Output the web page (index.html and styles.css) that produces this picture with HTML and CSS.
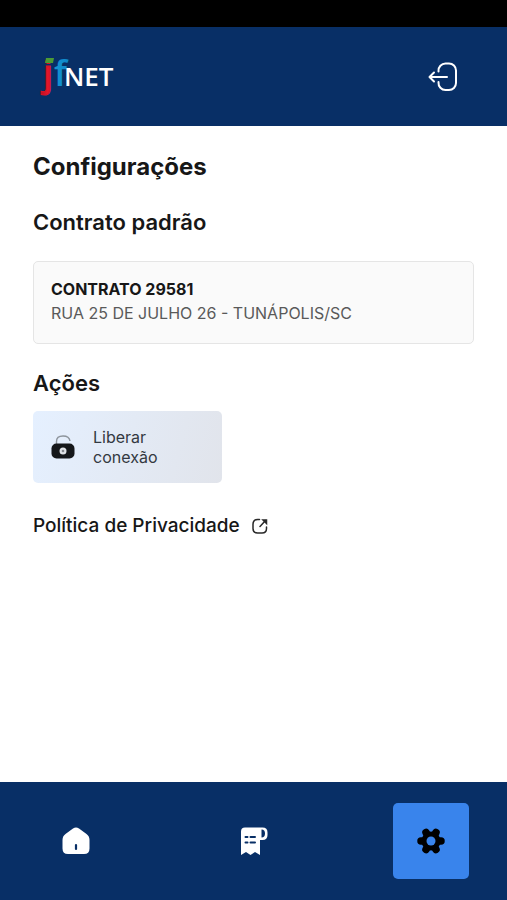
FILE: index.html
```html
<!DOCTYPE html>
<html lang="pt-BR">
<head>
<meta charset="utf-8">
<meta name="viewport" content="width=device-width, initial-scale=1">
<title>Configurações</title>
<link rel="stylesheet" href="styles.css">
</head>
<body>
<div class="status-bar"></div>
<header class="header">
  <svg class="logo" viewBox="0 0 80 44" role="img" aria-label="jfNET">
    <defs>
      <linearGradient id="red" x1="0" x2="1"><stop offset="0" stop-color="#b80d20"/><stop offset=".6" stop-color="#e5172b"/><stop offset="1" stop-color="#c21024"/></linearGradient>
      <linearGradient id="blue" x1="0" x2="1"><stop offset="0" stop-color="#1596d3"/><stop offset="1" stop-color="#0e86c8"/></linearGradient>
    </defs>
    <text class="logo-j" x="9" y="31">j</text>
    <path d="M12 3h8l-1 5h-8z" fill="#4c9b35"/>
    <text class="logo-f" x="20" y="31">f</text>
    <text class="logo-net" x="30" y="31">NET</text>
  </svg>
  <button class="logout" type="button" aria-label="Sair">
    <svg viewBox="0 0 30 30" fill="none" stroke="currentColor" stroke-width="2" stroke-linecap="round" stroke-linejoin="round">
      <path d="M10.500 9.500V9a7 7 0 0 1 7-7.500h3.500a7 7 0 0 1 7 7v12.500a7 7 0 0 1-7 7h-3.500a7 7 0 0 1-7-7.500v-.5M19 15H1.500M6 10.500 1.500 15 6 19.500"/>
    </svg>
  </button>
</header>
<main class="content">
  <h1 class="title">Configurações</h1>
  <h2 class="subtitle">Contrato padrão</h2>
  <section class="contract">
    <strong>CONTRATO 29581</strong>
    <span>RUA 25 DE JULHO 26 - TUNÁPOLIS/SC</span>
  </section>
  <h2 class="subtitle">Ações</h2>
  <div class="actions">
    <button class="action" type="button">
      <svg viewBox="0 0 24 24" aria-hidden="true">
        <path d="M5.500 9V6.500C5.500 2.500 8 1 12 1s6.500 1.500 7 5" fill="none" stroke="#8d949c" stroke-width="1.400"/>
        <rect x=".5" y="8.500" width="23" height="15" rx="5" fill="#15171a"/>
        <circle cx="12" cy="16" r="3.500" fill="#dfe2e6"/>
        <circle cx="12" cy="16" r="1.300" fill="#85898e"/>
      </svg>
      <span>Liberar conexão</span>
    </button>
  </div>
  <a class="privacy" href="#privacidade">Política de Privacidade
    <svg viewBox="0 0 16 16" fill="none" stroke="#292929" stroke-width="1.500" stroke-linecap="round" aria-hidden="true">
      <path d="M7.500 1.500H5.500Q1 1.500 1 6v4.500Q1 15 5.500 15h4.500q4.500 0 4.500-4.500V9M8 8.500l5.500-6"/>
      <path d="M11 2h3.500v3.500z" fill="#292929"/>
    </svg>
  </a>
</main>
<nav class="nav" aria-label="Principal">
  <a class="nav-item" href="#inicio" aria-label="Início">
    <svg viewBox="0 0 30 30">
      <path d="M12 2.500q3-2 6 0l7.500 5.500q3 2.200 3 6v8.500q0 5.500-5.500 5.500H7q-5.500 0-5.500-5.500V14q0-3.800 3-6z" fill="#fff"/>
      <path d="M15 19v4" stroke="#082f66" stroke-width="2.200" stroke-linecap="round"/>
    </svg>
  </a>
  <a class="nav-item" href="#faturas" aria-label="Faturas">
    <svg viewBox="0 0 30 30">
      <path d="M6 1.500h17.500q5 0 5 5V9q0 5-5 5H21v15l-5-3-4.500 3-4.500-3-5 3V5.500q0-4 4-4z" fill="#fff"/>
      <path d="M22.500 3.500q3.500 0 3.500 4t-3.500 4z" fill="#082f66"/>
      <path d="M6.500 11h2M11.500 11H16M6.500 16.500h2M11.500 16.500H16" stroke="#082f66" stroke-width="2" stroke-linecap="round"/>
    </svg>
  </a>
  <a class="nav-item nav-item-active" href="#configuracoes" aria-label="Configurações" aria-current="page">
    <svg viewBox="0 0 30 30">
      <g stroke="#000" stroke-width="7.500" stroke-linecap="round">
        <path d="M5 15h20M10 6.500l10 17M20 6.500l-10 17"/>
      </g>
      <circle cx="15" cy="15" r="9.500"/>
      <circle cx="15" cy="15" r="4.500" fill="#3984ec"/>
    </svg>
  </a>
</nav>
</body>
</html>
```
FILE: styles.css
```css
* { box-sizing: border-box; }

body {
  margin: 0;
  min-height: 100vh;
  display: flex;
  flex-direction: column;
  background: #fff;
  color: #171717;
  font-family: Inter, "Liberation Sans", sans-serif;
}

svg { display: block; flex: none; }

button {
  border: 0;
  font: inherit;
  cursor: pointer;
}

.status-bar { height: 27px; background: #000; }

.header {
  display: flex;
  align-items: center;
  justify-content: space-between;
  padding: 28px 49px 27px 34px;
  background: #082f66;
}

.logo { width: 80px; height: 44px; overflow: visible; }
.logo-j, .logo-f { font: 600 36px "Open Sans", sans-serif; }
.logo-j { fill: url(#red); stroke: #d51429; stroke-width: 1; }
.logo-f { fill: url(#blue); }
.logo-net { font: 600 26px "Open Sans", sans-serif; fill: #fff; }

.logout { padding: 0; background: none; color: #fff; }
.logout svg { width: 30px; height: 30px; }

.content { flex: 1; padding: 25px 33px; }

.title, .subtitle { margin: 0; }
.title { font-size: 24px; font-weight: 700; line-height: 32px; }
.subtitle { margin-top: 25px; font-size: 22px; font-weight: 600; line-height: 28px; }

.contract {
  display: flex;
  flex-direction: column;
  margin-top: 25px;
  padding: 15px 17px 18px;
  border: 1px solid #e5e5e5;
  border-radius: 5px;
  background: #fafafa;
  font-size: 16px;
  line-height: 24px;
}
.contract span { color: #595959; }

.actions {
  display: grid;
  grid-template-columns: repeat(2, minmax(0, 1fr));
  gap: 63px;
  margin-top: 14px;
}
.action {
  display: flex;
  align-items: center;
  gap: 18px;
  padding: 16px 18px;
  border-radius: 5px;
  background: linear-gradient(105deg, #e5f0ff, #e1e4eb);
  color: #333941;
  font-size: 16px;
  line-height: 20px;
  text-align: left;
}
.action svg { width: 24px; height: 24px; }

.privacy {
  display: flex;
  align-items: center;
  gap: 12px;
  margin-top: 31px;
  color: #171717;
  font-size: 19px;
  font-weight: 500;
  line-height: 24px;
  text-decoration: none;
}
.privacy svg { width: 16px; height: 16px; }

.nav {
  display: flex;
  justify-content: space-between;
  padding: 21px 38px;
  background: #082f66;
}
.nav-item {
  display: grid;
  place-items: center;
  width: 76px;
  height: 76px;
  border-radius: 5px;
}
.nav-item-active { background: #3984ec; }
.nav-item svg { width: 30px; height: 30px; }
```
